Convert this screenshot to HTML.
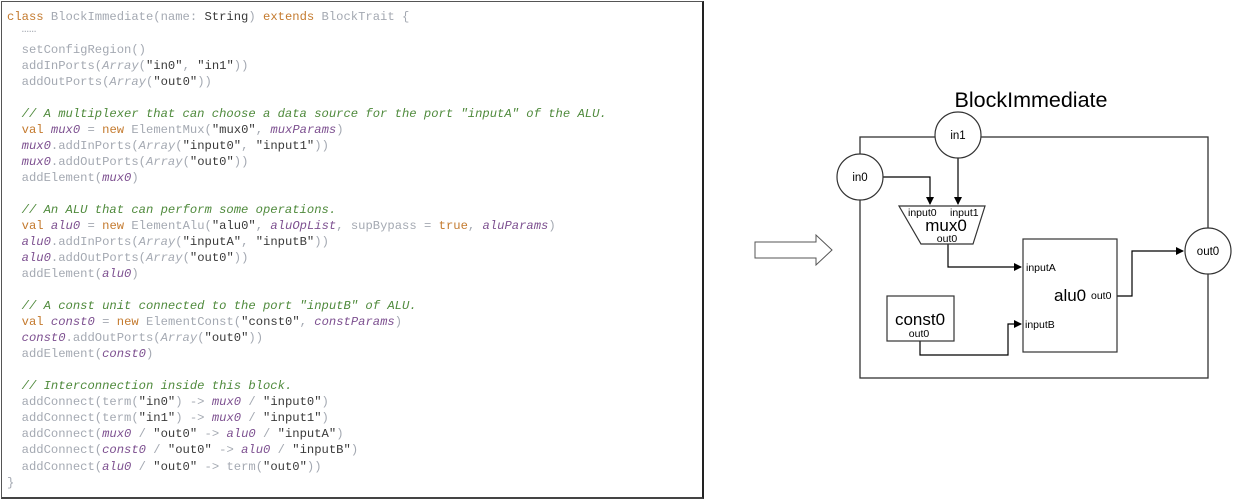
<!DOCTYPE html>
<html><head><meta charset="utf-8"><style>
body{margin:0;width:1237px;height:500px;background:#fff;position:relative;overflow:hidden}
#code{position:absolute;left:1px;top:1px;width:703px;height:498px;border:1px solid #555;border-right:2px solid #222;border-bottom:2px solid #444;box-sizing:border-box}
.l{position:absolute;left:7px;white-space:pre;font-family:"Liberation Mono",monospace;font-size:12.2px;color:#a4a9b2;line-height:14px}
.k{color:#c47a2e}.s{color:#3a3a3a}.c{color:#4f8a3c;font-style:italic}.v{color:#7d5090;font-style:italic}.a{font-style:italic}
</style></head><body>
<div id="code"></div>
<div class="l" style="top:10px"><span class="k">class</span> BlockImmediate(name: <span class="s">String</span>) <span class="k">extends</span> BlockTrait {</div>
<div class="l" style="top:22px">  ……</div>
<div class="l" style="top:43px">  setConfigRegion()</div>
<div class="l" style="top:59px">  addInPorts(<span class="a">Array</span>(<span class="s">"in0"</span>, <span class="s">"in1"</span>))</div>
<div class="l" style="top:75px">  addOutPorts(<span class="a">Array</span>(<span class="s">"out0"</span>))</div>
<div class="l" style="top:107px">  <span class="c">// A multiplexer that can choose a data source for the port "inputA" of the ALU.</span></div>
<div class="l" style="top:123px">  <span class="k">val</span> <span class="v">mux0</span> = <span class="k">new</span> ElementMux(<span class="s">"mux0"</span>, <span class="v">muxParams</span>)</div>
<div class="l" style="top:139px">  <span class="v">mux0</span>.addInPorts(<span class="a">Array</span>(<span class="s">"input0"</span>, <span class="s">"input1"</span>))</div>
<div class="l" style="top:155px">  <span class="v">mux0</span>.addOutPorts(<span class="a">Array</span>(<span class="s">"out0"</span>))</div>
<div class="l" style="top:171px">  addElement(<span class="v">mux0</span>)</div>
<div class="l" style="top:203px">  <span class="c">// An ALU that can perform some operations.</span></div>
<div class="l" style="top:219px">  <span class="k">val</span> <span class="v">alu0</span> = <span class="k">new</span> ElementAlu(<span class="s">"alu0"</span>, <span class="v">aluOpList</span>, supBypass = <span class="k">true</span>, <span class="v">aluParams</span>)</div>
<div class="l" style="top:235px">  <span class="v">alu0</span>.addInPorts(<span class="a">Array</span>(<span class="s">"inputA"</span>, <span class="s">"inputB"</span>))</div>
<div class="l" style="top:251px">  <span class="v">alu0</span>.addOutPorts(<span class="a">Array</span>(<span class="s">"out0"</span>))</div>
<div class="l" style="top:267px">  addElement(<span class="v">alu0</span>)</div>
<div class="l" style="top:299px">  <span class="c">// A const unit connected to the port "inputB" of ALU.</span></div>
<div class="l" style="top:315px">  <span class="k">val</span> <span class="v">const0</span> = <span class="k">new</span> ElementConst(<span class="s">"const0"</span>, <span class="v">constParams</span>)</div>
<div class="l" style="top:331px">  <span class="v">const0</span>.addOutPorts(<span class="a">Array</span>(<span class="s">"out0"</span>))</div>
<div class="l" style="top:347px">  addElement(<span class="v">const0</span>)</div>
<div class="l" style="top:379px">  <span class="c">// Interconnection inside this block.</span></div>
<div class="l" style="top:395px">  addConnect(term(<span class="s">"in0"</span>) -> <span class="v">mux0</span> / <span class="s">"input0"</span>)</div>
<div class="l" style="top:411px">  addConnect(term(<span class="s">"in1"</span>) -> <span class="v">mux0</span> / <span class="s">"input1"</span>)</div>
<div class="l" style="top:427px">  addConnect(<span class="v">mux0</span> / <span class="s">"out0"</span> -> <span class="v">alu0</span> / <span class="s">"inputA"</span>)</div>
<div class="l" style="top:443px">  addConnect(<span class="v">const0</span> / <span class="s">"out0"</span> -> <span class="v">alu0</span> / <span class="s">"inputB"</span>)</div>
<div class="l" style="top:460px">  addConnect(<span class="v">alu0</span> / <span class="s">"out0"</span> -> term(<span class="s">"out0"</span>))</div>
<div class="l" style="top:476px">}</div>

<svg width="1237" height="500" style="position:absolute;left:0;top:0" font-family="Liberation Sans, sans-serif">
<defs><marker id="ar" markerWidth="8" markerHeight="8" refX="7" refY="4" orient="auto" markerUnits="userSpaceOnUse"><path d="M0,0 L8,4 L0,8 z" fill="#000"/></marker></defs>
<path d="M755,242 H816 V235 L832,250 L816,265 V258 H755 Z" fill="#fff" stroke="#555" stroke-width="1"/>
<text x="1031" y="107" font-size="21.5" text-anchor="middle" fill="#000">BlockImmediate</text>
<rect x="860" y="137" width="348" height="241" fill="none" stroke="#333" stroke-width="1.3"/>
<g fill="none" stroke="#000" stroke-width="1.2">
<path d="M883,177 H930 V204" marker-end="url(#ar)"/>
<path d="M958,158 V204" marker-end="url(#ar)"/>
<path d="M948,244 V267 H1021" marker-end="url(#ar)"/>
<path d="M1117,296 H1132 V251 H1183" marker-end="url(#ar)"/>
<path d="M920,341 V355 H1008 V324 H1021" marker-end="url(#ar)"/>
</g>
<g fill="#fff" stroke="#333" stroke-width="1.2">
<circle cx="958" cy="135" r="23"/><circle cx="860" cy="177" r="23"/><circle cx="1208" cy="251" r="23"/>
<path d="M899,206 H985 L973,244 H921 Z"/>
<rect x="1023" y="239" width="94" height="113"/>
<rect x="887" y="296" width="67" height="45"/>
</g>
<g fill="#000" font-size="11.5">
<text x="958" y="139" text-anchor="middle">in1</text>
<text x="860" y="181" text-anchor="middle">in0</text>
<text x="1208" y="255" text-anchor="middle">out0</text>
<text x="908" y="216" font-size="10.5">input0</text>
<text x="950" y="216" font-size="10.5">input1</text>
<text x="946" y="231" font-size="17" text-anchor="middle">mux0</text>
<text x="947" y="242" font-size="10.5" text-anchor="middle">out0</text>
<text x="1026" y="271" font-size="10.5">inputA</text>
<text x="1025" y="328" font-size="10.5">inputB</text>
<text x="1054" y="301" font-size="17">alu0</text>
<text x="1091" y="299" font-size="10.5">out0</text>
<text x="920" y="325" font-size="17" text-anchor="middle">const0</text>
<text x="919" y="337" font-size="10.5" text-anchor="middle">out0</text>
</g>
</svg>
</body></html>
